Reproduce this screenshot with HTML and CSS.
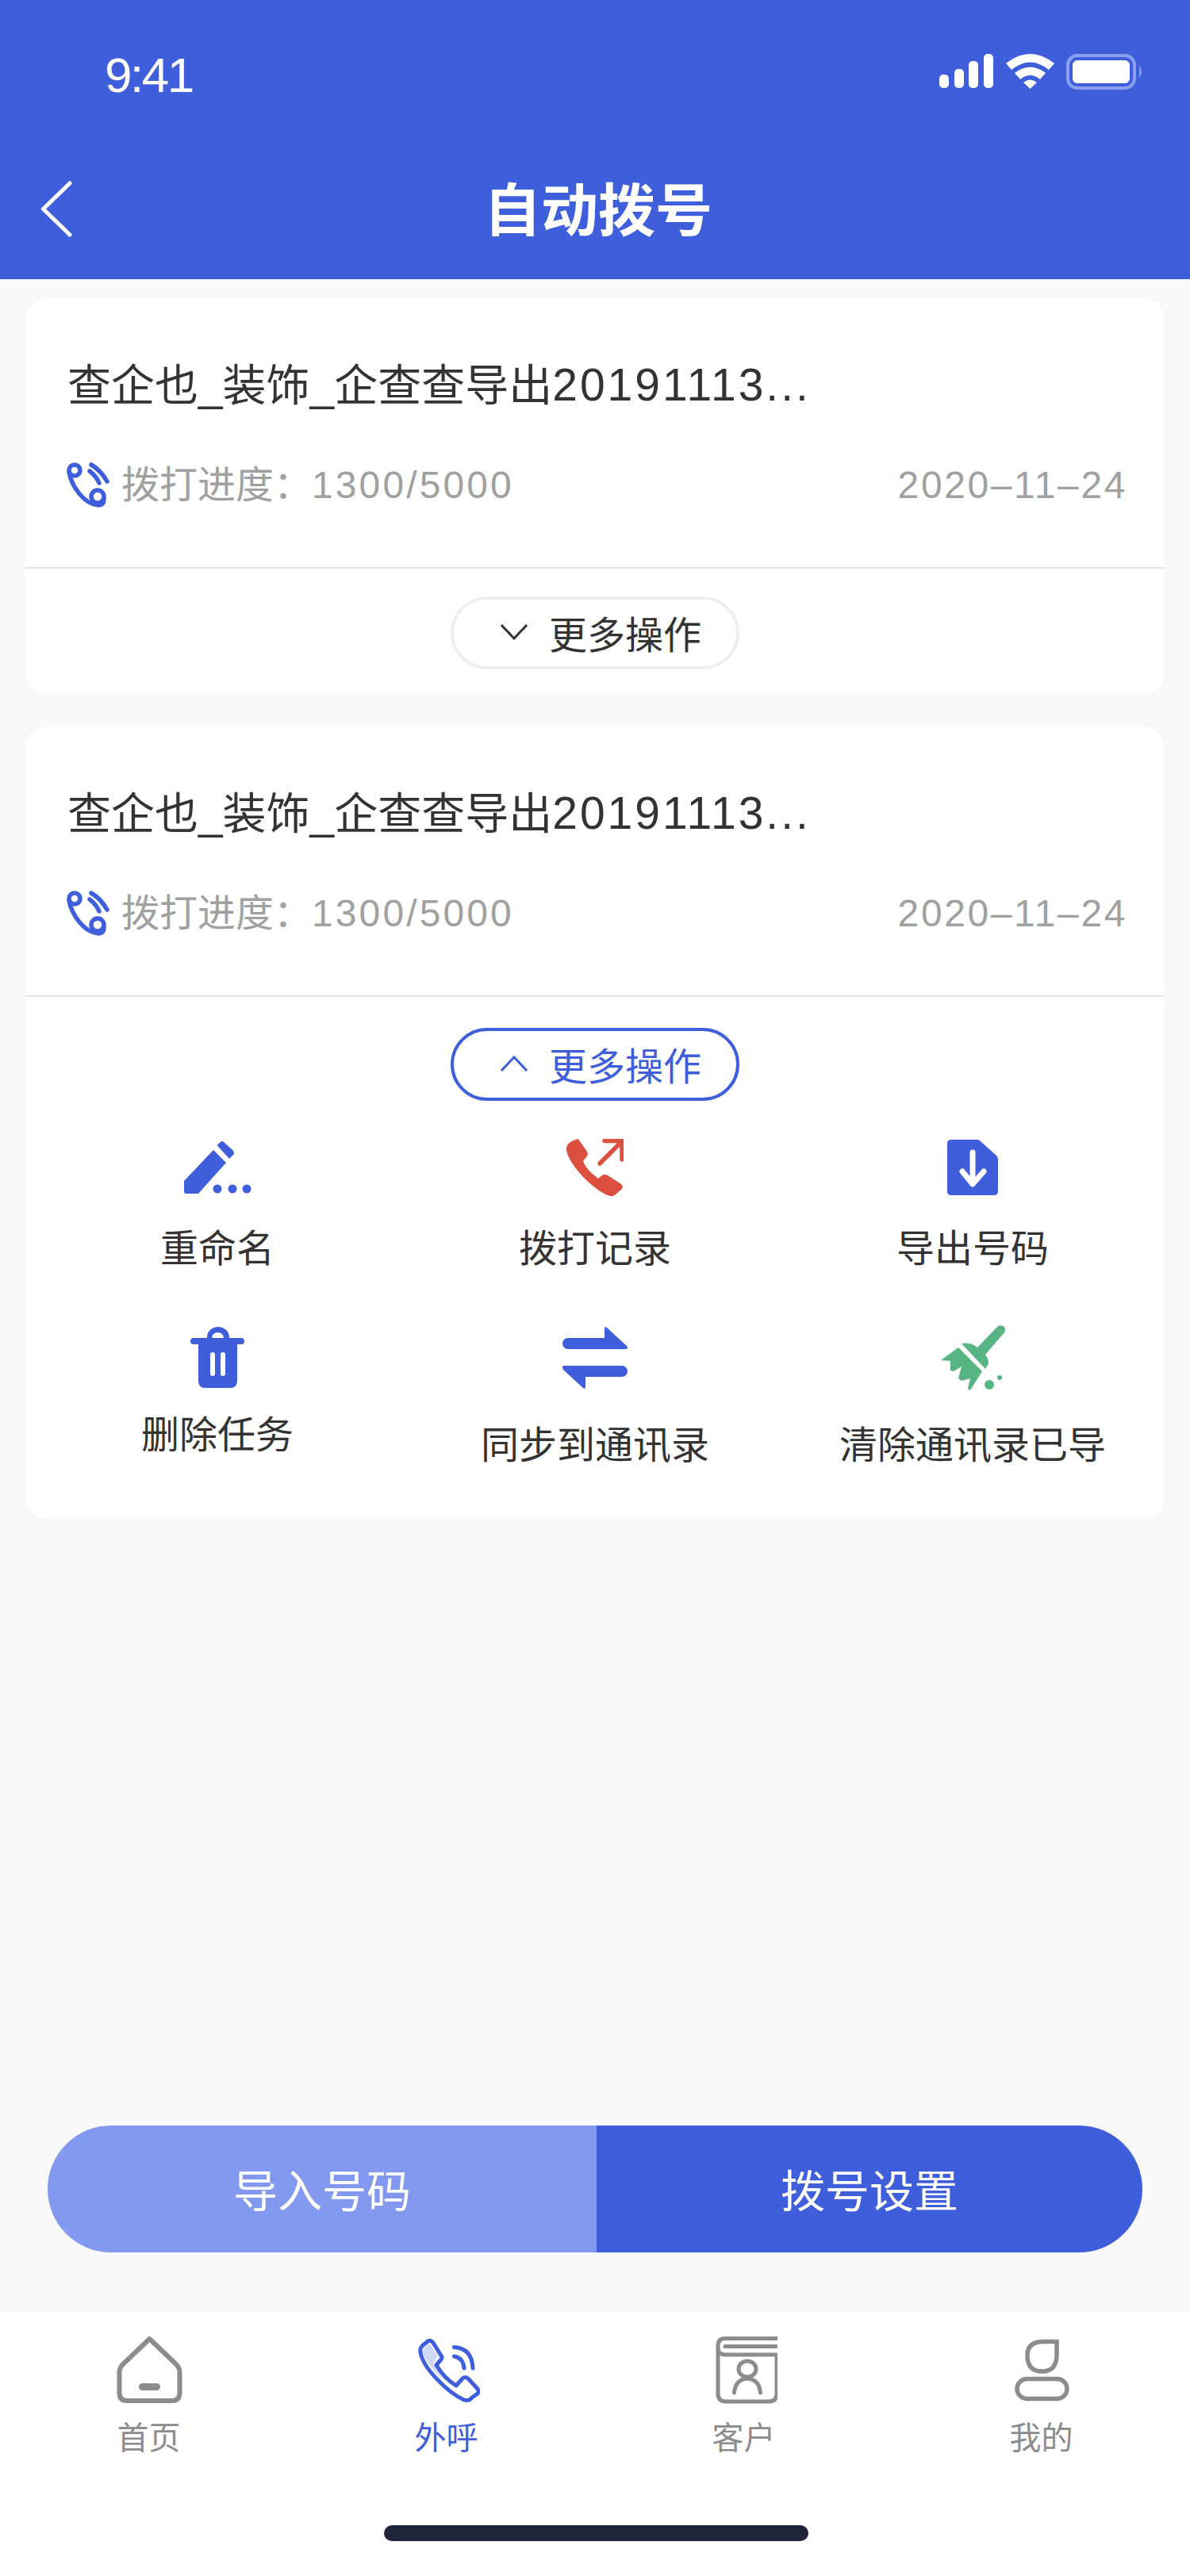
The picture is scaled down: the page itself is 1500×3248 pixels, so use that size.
FILE: index.html
```html
<!DOCTYPE html>
<html lang="zh-CN">
<head>
<meta charset="utf-8">
<title>自动拨号</title>
<link rel="stylesheet" href="styles.css">
</head>
<body>
<div class="app">
  <header class="top">
    <div class="status">
      <span class="time">9:41</span>
      <svg class="status-icons" width="258" height="46" viewBox="0 0 258 46">
        <g fill="#fff">
          <rect x="0" y="26" width="12" height="17" rx="5"/><rect x="19" y="19" width="12" height="24" rx="5"/><rect x="37" y="9" width="12" height="34" rx="5"/><rect x="56" y="0" width="12" height="43" rx="5"/>
          <path d="M84 12 Q114.500 -12 145 12 L138 20 Q114.500 1 91 20 Z"/>
          <path d="M95 24 Q114.500 9 134 24 L127 32 Q114.500 22 102 32 Z"/>
          <path d="M106 36 Q114.500 29 123 36 L114.500 44 Z"/>
        </g>
        <rect x="162" y="2" width="84" height="41" rx="12" fill="none" stroke="#8b9ff0" stroke-width="4"/>
        <rect x="168" y="8" width="72" height="29" rx="6" fill="#fff"/>
        <path d="M252 15 Q258 22 252 30 Z" fill="#8b9ff0"/>
      </svg>
    </div>
    <div class="nav">
      <svg class="back" width="44" height="74" viewBox="0 0 44 74"><path d="M40 5 L6.500 37.500 L40 70" fill="none" stroke="#fff" stroke-width="5" stroke-linecap="round" stroke-linejoin="round"/></svg>
      <h1 class="title">自动拨号</h1>
    </div>
  </header>

  <main class="list">
    <section class="card">
      <div class="info">
        <p class="name">查企也_装饰_企查查导出<span class="num">20191113...</span></p>
        <div class="meta">
          <span class="progress">
            <svg width="54" height="58" viewBox="0 0 54 58"><g fill="none" stroke="#3e5edb" stroke-width="5.500" stroke-linecap="round"><circle cx="10" cy="10" r="7"/><circle cx="39" cy="43" r="8"/><path d="M3 12 C6 30 22 53 40 54 Q47 54 47 46"/><path d="M29 11 Q37 17 41 26"/><path d="M31 3 Q43 10 51 24"/></g></svg>
            <span>拨打进度：<span class="num-s">1300/5000</span></span>
          </span>
          <span class="date">2020–11–24</span>
        </div>
      </div>
      <div class="more-row">
        <button class="more">
          <svg width="34" height="20" viewBox="0 0 34 20"><path d="M1 1 L17 18 L33 1" fill="none" stroke="#333" stroke-width="3"/></svg>
          更多操作
        </button>
      </div>
    </section>

    <section class="card">
      <div class="info">
        <p class="name">查企也_装饰_企查查导出<span class="num">20191113...</span></p>
        <div class="meta">
          <span class="progress">
            <svg width="54" height="58" viewBox="0 0 54 58"><g fill="none" stroke="#3e5edb" stroke-width="5.500" stroke-linecap="round"><circle cx="10" cy="10" r="7"/><circle cx="39" cy="43" r="8"/><path d="M3 12 C6 30 22 53 40 54 Q47 54 47 46"/><path d="M29 11 Q37 17 41 26"/><path d="M31 3 Q43 10 51 24"/></g></svg>
            <span>拨打进度：<span class="num-s">1300/5000</span></span>
          </span>
          <span class="date">2020–11–24</span>
        </div>
      </div>
      <div class="more-row open">
        <button class="more active">
          <svg width="34" height="20" viewBox="0 0 34 20"><path d="M1 19 L17 2 L33 19" fill="none" stroke="#3e5edb" stroke-width="3"/></svg>
          更多操作
        </button>
      </div>
      <div class="actions">
        <div class="action">
          <div class="icon"><svg width="85" height="66" viewBox="0 0 85 66"><g fill="#3e5edb"><path d="M37 11 L53 27 L18 66 H3 Q0 66 0 63 V50 Z"/><path d="M41.500 5 L46 1 Q48 -1 50 1 L62 12 Q64 15 62 17 L57 22 Z"/><circle cx="42" cy="60" r="5.500"/><circle cx="61" cy="60" r="5.500"/><circle cx="79" cy="60" r="5.500"/></g></svg></div>
          <span>重命名</span>
        </div>
        <div class="action">
          <div class="icon"><svg width="72" height="72" viewBox="0 0 72 72"><path d="M11 1 Q15 -1 17 3 L26 16 Q28 20 25 23 L21 28 Q24 38 40 50 L45 46 Q48 44 52 46 L69 57 Q72 60 70 63 L62 70 Q58 74 52 71 C30 62 2 30 0 14 Q-1 5 11 1 Z" fill="#dd4f3f"/><path d="M42 31 L69 4 M48 2.500 H70 V26" fill="none" stroke="#dd4f3f" stroke-width="5.500" stroke-linecap="round" stroke-linejoin="round"/></svg></div>
          <span>拨打记录</span>
        </div>
        <div class="action">
          <div class="icon"><svg width="64" height="70" viewBox="0 0 64 70"><path d="M5 0 H38 Q41 0 43 3 L62 20 Q64 22 64 26 V65 Q64 70 59 70 H5 Q0 70 0 65 V5 Q0 0 5 0 Z" fill="#3e5edb"/><path d="M32 16 V54 M19 40 L32 56 L46 40" fill="none" stroke="#fff" stroke-width="7" stroke-linecap="round" stroke-linejoin="round"/></svg></div>
          <span>导出号码</span>
        </div>
        <div class="action row2 low">
          <div class="icon"><svg width="68" height="78" viewBox="0 0 68 78"><g fill="#3e5edb"><path d="M21 14 V13 A14 13 0 0 1 49 13 V14 H42 A7.500 7 0 0 0 27 14 Z"/><rect x="0" y="14" width="68" height="8" rx="4"/><path d="M10 22 H59 V68 Q59 77 50 77 H19 Q10 77 10 68 Z"/></g><rect x="25" y="32" width="6" height="30" rx="3" fill="#fff"/><rect x="38" y="32" width="6" height="30" rx="3" fill="#fff"/></svg></div>
          <span>删除任务</span>
        </div>
        <div class="action row2">
          <div class="icon"><svg width="82" height="78" viewBox="0 0 82 78"><g fill="#3e5edb"><path d="M53 2 Q53 -1 56 1 L81 24 Q84 28 79 28 H7 A7 7 0 0 1 7 14 H53 Z"/><path d="M29 76 Q29 79 26 77 L1 54 Q-2 49 3 49 H75 A7 7 0 0 1 75 63 H29 Z"/></g></svg></div>
          <span>同步到通讯录</span>
        </div>
        <div class="action row2">
          <div class="icon"><svg width="82" height="82" viewBox="0 0 82 82"><g fill="#57b583"><path d="M1 44 L23 28 L53 58 L38 82 L35 80 L38 67 L27 70 L23 67 L27 52 L17 58 L13 57 L13 45 Z"/><path d="M27 23 Q38 21 47 28 L73 1 Q77 -1 81 2 Q83 6 81 9 L57 37 Q63 45 60 50 L57 55 Z"/><circle cx="62" cy="75" r="6"/><circle cx="75" cy="66" r="3"/></g></svg></div>
          <span>清除通讯录已导</span>
        </div>
      </div>
    </section>
  </main>

  <div class="cta">
    <button class="cta-left">导入号码</button>
    <button class="cta-right">拨号设置</button>
  </div>

  <nav class="tabs">
    <div class="tab">
      <svg width="84" height="88" viewBox="0 0 84 88"><path d="M42.500 5 L75 36 Q80.500 41 80.500 47 V73 Q80.500 83 71 83 H14 Q4.500 83 4.500 73 V47 Q4.500 41 10 36 Z" fill="none" stroke="#8c8c8c" stroke-width="6" stroke-linejoin="round"/><rect x="29" y="61" width="27" height="9" rx="4.500" fill="#8c8c8c"/></svg>
      <span>首页</span>
    </div>
    <div class="tab active">
      <svg width="84" height="88" viewBox="0 0 84 88"><path d="M11 20 L20 10 L31 27 L25 36 Q30 46 38 56 C26 46 14 32 11 20 Z" fill="#d0d8f7"/><path d="M17 9 Q21.600 5 25 10 L35 26 Q37 28 35 31 L29 38 Q38 54 54 64 L62 55 Q65.600 52 69 55 L81 68 Q83 71 81 74 L74 79 Q70 84 64 82 C44 73 12 42 9 22 Q8 17 11 14 Z" fill="none" stroke="#3e5edb" stroke-width="5" stroke-linejoin="round"/><path d="M51.500 15.500 Q74 17 75 42 M51.500 27 Q63 29 64 42" fill="none" stroke="#3e5edb" stroke-width="5" stroke-linecap="round"/></svg>
      <span>外呼</span>
    </div>
    <div class="tab">
      <svg width="84" height="88" viewBox="0 0 84 88"><g fill="none" stroke="#8c8c8c" stroke-width="5" stroke-linecap="round"><path d="M84 4.500 H18 Q9 4.500 9 14 V74 Q9 84 19 84 H73 Q83 84 83 74 V25 H18 Q9 25 9 16"/><path d="M18 14.500 H82"/><ellipse cx="46" cy="43" rx="11" ry="10"/><path d="M29.500 73 Q31 56 46 55 Q61 56 62.500 73"/></g></svg>
      <span>客户</span>
    </div>
    <div class="tab">
      <svg width="84" height="88" viewBox="0 0 84 88"><g fill="none" stroke="#8c8c8c" stroke-width="5.500"><path d="M61 8.500 V25 Q61 46 42.500 46 Q24 46 24 26 Q24 8.500 44 8.500 Z"/><rect x="11" y="55.500" width="63" height="25" rx="12.500"/></g></svg>
      <span>我的</span>
    </div>
    <div class="home-bar"></div>
  </nav>
</div>
</body>
</html>
```

FILE: styles.css
```css
* { box-sizing: border-box; }
html, body { margin: 0; padding: 0; }
body { font-family: "Liberation Sans", "Noto Sans CJK SC", sans-serif; color: #333; }
.app { width: 1500px; height: 3248px; background: #f8f8f8; display: flex; flex-direction: column; overflow: hidden; }

.top { background: #3e5edb; height: 352px; color: #fff; }
.status { height: 176px; display: flex; justify-content: space-between; align-items: flex-start; padding: 0 58px 0 132px; }
.time { font-size: 62px; line-height: 70px; letter-spacing: -2.5px; margin-top: 60px; }
.status-icons { margin-top: 68px; }
.nav { position: relative; display: flex; justify-content: center; align-items: center; margin-top: 40px; height: 100px; padding-left: 8px; }
.back { position: absolute; left: 48px; top: 10px; }
.title { font-size: 72px; font-weight: bold; margin: 0; line-height: 100px; }

.list { display: flex; flex-direction: column; gap: 40px; padding: 24px 32px 0; flex: 1; }
.card { background: #fff; border-radius: 28px; }
.info { height: 341px; padding: 67px 47px 0 53px; border-bottom: 2px solid #e6e6e6; }
.name { margin: 0; font-size: 55px; line-height: 84px; color: #333; }
.num { font-size: 57px; letter-spacing: 3px; }
.meta { display: flex; justify-content: space-between; align-items: center; margin-top: 49px; font-size: 48px; line-height: 70px; color: #a0a0a0; }
.num-s { letter-spacing: 3.1px; }
.date { letter-spacing: 2.6px; }
.progress { display: flex; align-items: center; gap: 15px; margin-left: -1px; }

.more-row { height: 159px; display: flex; justify-content: center; padding-top: 35px; }
.more-row.open { height: auto; padding-top: 39px; }
.more { width: 364px; height: 92px; border: 4px solid #eeeeee; border-radius: 46px; background: #fff; font: inherit; font-size: 48px; color: #333; display: flex; align-items: center; justify-content: center; gap: 27px; padding: 0 0 2px 15px; }
.more.active { border-color: #3e5edb; color: #3e5edb; }

.actions { display: grid; grid-template-columns: repeat(3, 476px); grid-auto-rows: 240px; justify-content: center; padding-bottom: 47px; }
.action { display: flex; flex-direction: column; align-items: center; font-size: 48px; line-height: 66px; color: #333; padding-top: 44px; gap: 30px; }
.action.row2 { gap: 38px; }
.action.row2.low { gap: 25px; }
.icon { height: 80px; display: flex; align-items: center; justify-content: center; }

.cta { display: flex; margin: 0 60px 76px; height: 160px; border-radius: 80px; overflow: hidden; font-size: 56px; }
.cta button { border: 0; font: inherit; color: #fff; padding: 0 0 4px; }
.cta-left { background: #8399ef; width: 692px; }
.cta-right { background: #3e5edb; flex: 1; }

.tabs { position: relative; height: 332px; background: #fff; display: grid; grid-template-columns: repeat(4, 1fr); padding-top: 28px; align-items: start; }
.tab { display: flex; flex-direction: column; align-items: center; font-size: 40px; line-height: 54px; color: #8c8c8c; gap: 15px; }
.tab.active { color: #3e5edb; }
.home-bar { position: absolute; left: 484px; bottom: 44px; width: 535px; height: 20px; border-radius: 10px; background: #20243a; }
```
